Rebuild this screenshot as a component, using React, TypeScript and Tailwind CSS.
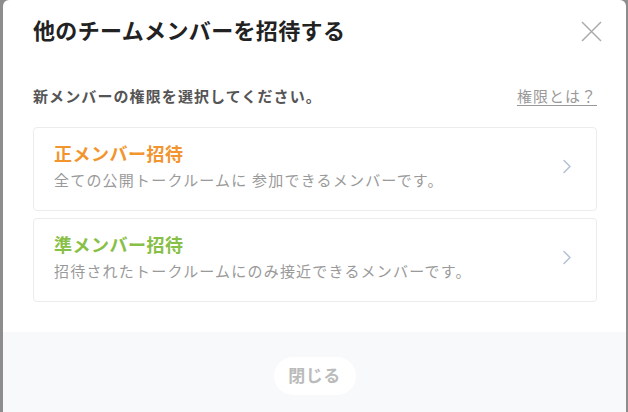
const font = { fontFamily: '"Noto Sans CJK JP", "Noto Sans", sans-serif' };

function Chevron() {
  return (
    <svg width="10" height="15" viewBox="0 0 10 15" fill="none" stroke="#b7c3d2" strokeWidth="1.6" strokeLinecap="round" strokeLinejoin="round">
      <path d="M2 1.5l6 6-6 6" />
    </svg>
  );
}

function RoleCard({ title, color, desc }: { title: string; color: string; desc: string }) {
  return (
    <button className="w-full flex items-center justify-between text-left border border-[#ececec] rounded-[4px] bg-white pl-[20px] pr-[24px] pt-[12px] pb-[18px]">
      <div>
        <div className={`text-[18px] leading-[26px] font-bold tracking-[0.5px] ${color}`}>{title}</div>
        <div className="mt-[2px] text-[15px] leading-[24px] tracking-[1.2px] text-[#9a9a9a]">{desc}</div>
      </div>
      <Chevron />
    </button>
  );
}

export default function App() {
  return (
    <div className="w-[628px] h-[412px] bg-[#8d8d8d] overflow-hidden px-[2px]" style={font}>
      <div className="ml-[1px] w-[623px] h-[412px] bg-white rounded-t-[6px] flex flex-col">
        {/* Header */}
        <div className="flex items-start justify-between pl-[30px] pr-[24px] pt-[14px]">
          <h1 className="text-[22px] leading-[30px] font-bold tracking-[0.35px] text-[#222]">他のチームメンバーを招待する</h1>
          <button className="mt-[7px] w-[21px] h-[21px]" aria-label="閉じる">
            <svg width="21" height="21" viewBox="0 0 21 21" stroke="#ababab" strokeWidth="1.5">
              <path d="M1 1l19 19M20 1L1 20" />
            </svg>
          </button>
        </div>

        {/* Body */}
        <div className="pl-[30px] pr-[29px] pt-[41px] pb-[30px]">
          <div className="flex items-center justify-between">
            <p className="text-[15px] leading-[22px] tracking-[1.1px] font-bold text-[#555]">新メンバーの権限を選択してください。</p>
            <a className="text-[15px] leading-[22px] tracking-[1px] text-[#999] underline underline-offset-[3px]">権限とは？</a>
          </div>
          <div className="mt-[20px] flex flex-col gap-[7px]">
            <RoleCard title="正メンバー招待" color="text-[#f2952f]" desc="全ての公開トークルームに 参加できるメンバーです。" />
            <RoleCard title="準メンバー招待" color="text-[#88c047]" desc="招待されたトークルームにのみ接近できるメンバーです。" />
          </div>
        </div>

        {/* Footer */}
        <div className="flex-1 bg-[#f8f9fb] flex justify-center pt-[25px]">
          <button className="h-[38px] w-[82px] rounded-full bg-white flex items-center justify-center pb-[4px] text-[17px] leading-none font-bold text-[#bbbbbb] tracking-[0.5px]">閉じる</button>
        </div>
      </div>
    </div>
  );
}
